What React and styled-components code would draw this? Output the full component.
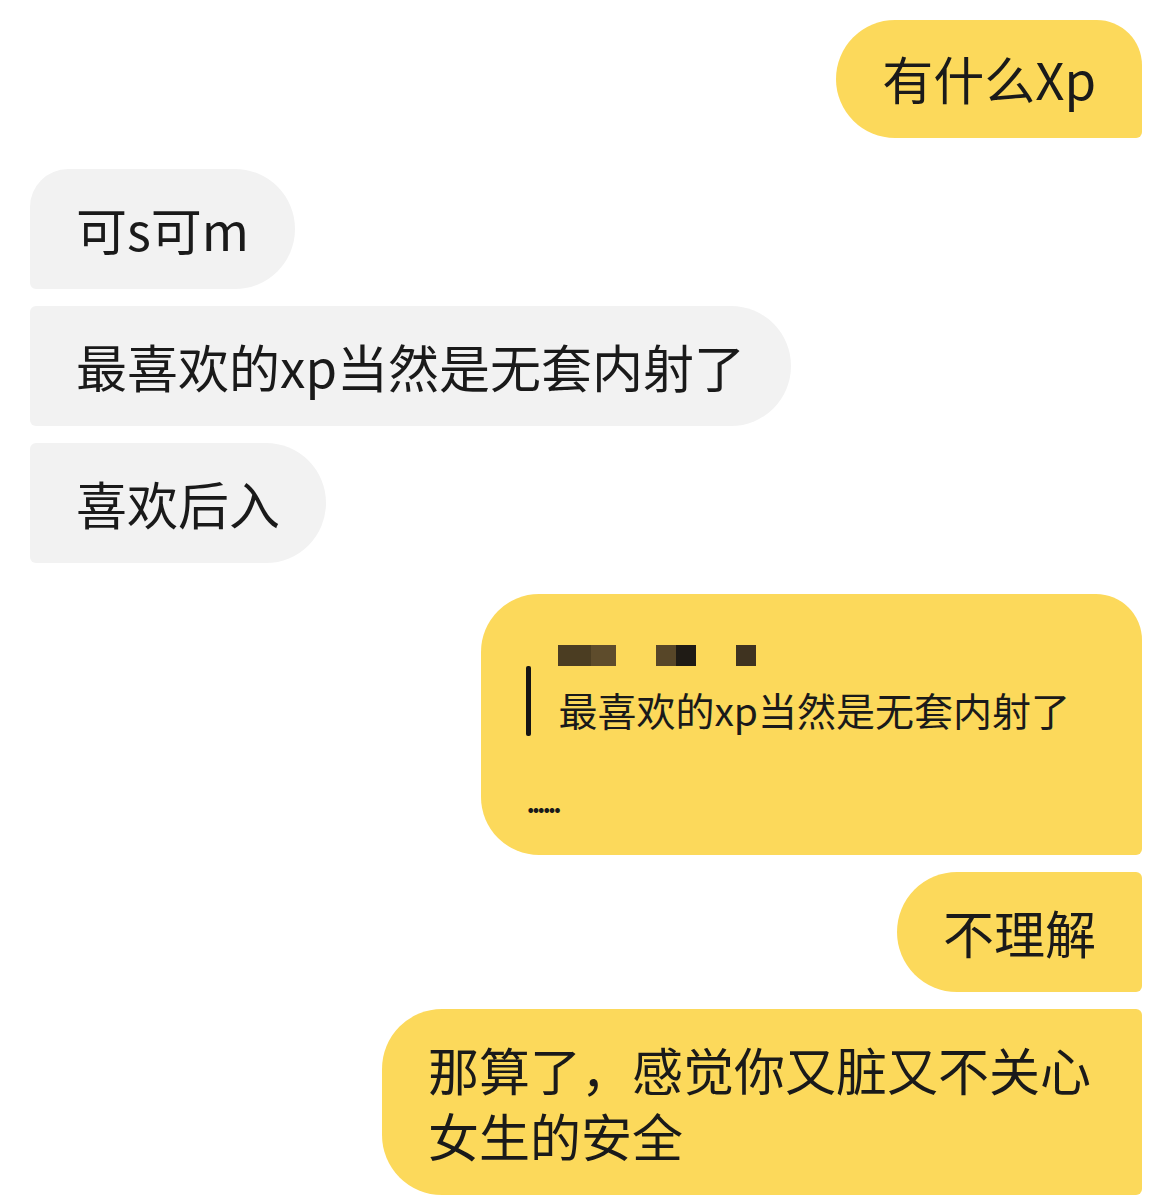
import React from "react";
import styled, { createGlobalStyle, css } from "styled-components";

const GlobalStyle = createGlobalStyle`
  html, body {
    margin: 0;
    padding: 0;
    background: #ffffff;
  }
  body {
    font-family: "Noto Sans CJK SC", "Noto Sans", sans-serif;
    color: #1a1a1a;
  }
`;

const YELLOW = "#fcd95b";
const GRAY = "#f2f2f2";

const Thread = styled.div`
  display: flex;
  flex-direction: column;
  gap: 31px;
  padding: 20px 30px 0;
  width: 1172px;
  box-sizing: border-box;
`;

const Group = styled.div`
  display: flex;
  flex-direction: column;
  gap: 17px;
  align-items: ${(p) => (p.$side === "right" ? "flex-end" : "flex-start")};
`;

const radii = {
  left: {
    first: "38px 60px 60px 6px",
    middle: "6px 60px 60px 6px",
    last: "6px 60px 60px 6px",
  },
  right: {
    single: "60px 46px 6px 60px",
    first: "58px 46px 6px 58px",
    middle: "60px 6px 6px 60px",
    last: "60px 6px 6px 60px",
  },
};

const Bubble = styled.div`
  box-sizing: border-box;
  padding: 27px 46px;
  font-size: 51px;
  line-height: 66px;
  white-space: nowrap;
  background: ${(p) => (p.$side === "right" ? YELLOW : GRAY)};
  border-radius: ${(p) => radii[p.$side][p.$pos]};
  ${(p) =>
    p.$wrap &&
    css`
      white-space: normal;
      max-width: 760px;
    `}
  ${(p) =>
    p.$tight &&
    css`
      padding-top: 25px;
      padding-bottom: 27px;
    `}
`;

const QuoteBubble = styled.div`
  box-sizing: border-box;
  padding: 51px 72px 38px 45px;
  background: ${YELLOW};
  border-radius: ${radii.right.first};
  display: flex;
  flex-direction: column;
`;

const NameMosaic = styled.svg`
  display: block;
  margin-left: 32px;
  width: 200px;
  height: 21px;
`;

const QuoteRow = styled.div`
  display: flex;
  align-items: center;
  height: 70px;
`;

const QuoteBar = styled.div`
  width: 5px;
  align-self: stretch;
  background: #141414;
  border-radius: 2px;
`;

const QuoteText = styled.div`
  margin-left: 27px;
  font-size: 39px;
  line-height: 50px;
  padding-top: 16px;
  white-space: nowrap;
`;

const Dots = styled.div`
  margin-top: 51px;
  margin-left: 0;
  font-size: 26px;
  font-weight: 700;
  line-height: 30px;
  letter-spacing: -3.1px;
`;

export default function App() {
  return (
    <>
      <GlobalStyle />
      <Thread>
        <Group $side="right">
          <Bubble $side="right" $pos="single" $tight>
            有什么Xp
          </Bubble>
        </Group>
        <Group $side="left">
          <Bubble $side="left" $pos="first">可s可m</Bubble>
          <Bubble $side="left" $pos="middle">最喜欢的xp当然是无套内射了</Bubble>
          <Bubble $side="left" $pos="last">喜欢后入</Bubble>
        </Group>
        <Group $side="right">
          <QuoteBubble>
            <NameMosaic viewBox="0 0 200 21" aria-hidden="true">
              <rect x="0" y="0" width="33" height="21" fill="#4b3d22" />
              <rect x="33" y="0" width="25" height="21" fill="#5e4c2c" />
              <rect x="98" y="0" width="20" height="21" fill="#574628" />
              <rect x="118" y="0" width="20" height="21" fill="#1f1b15" />
              <rect x="178" y="0" width="20" height="21" fill="#3f3320" />
            </NameMosaic>
            <QuoteRow>
              <QuoteBar />
              <QuoteText>最喜欢的xp当然是无套内射了</QuoteText>
            </QuoteRow>
            <Dots>......</Dots>
          </QuoteBubble>
          <Bubble $side="right" $pos="middle">不理解</Bubble>
          <Bubble $side="right" $pos="last" $wrap>
            那算了，感觉你又脏又不关心女生的安全
          </Bubble>
        </Group>
      </Thread>
    </>
  );
}
